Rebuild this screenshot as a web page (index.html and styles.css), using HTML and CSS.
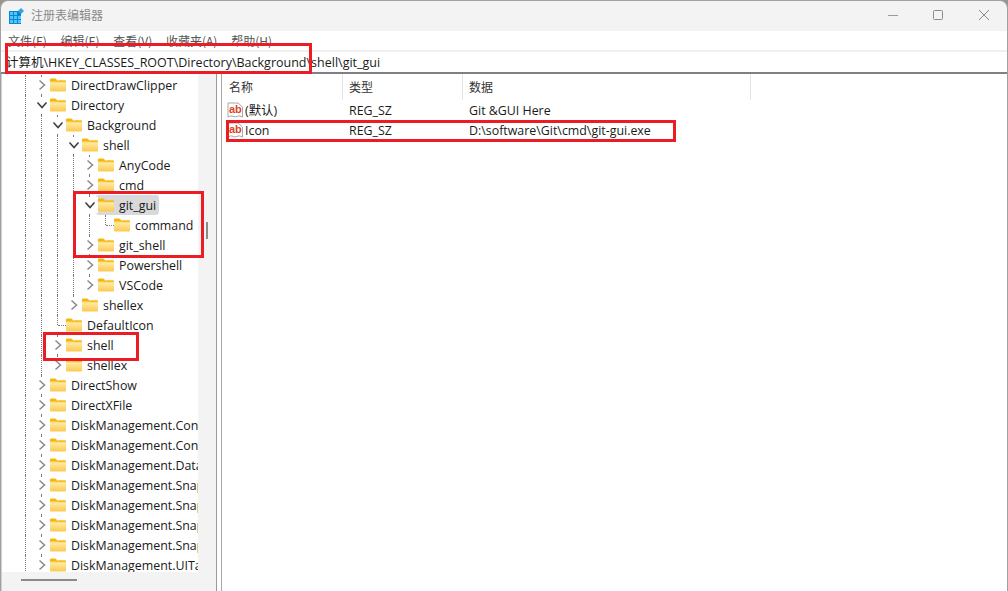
FILE: index.html
```html
<!DOCTYPE html>
<html lang="zh">
<head>
<meta charset="utf-8">
<title>注册表编辑器</title>
<link rel="stylesheet" href="styles.css">
</head>
<body>
<svg class="defs" width="0" height="0" aria-hidden="true">
  <defs>
    <linearGradient id="fg" x1="0" y1="0" x2="0" y2="1"><stop offset="0" stop-color="#ffeeb0"/><stop offset="1" stop-color="#fcc94f"/></linearGradient>
    <symbol id="folder" viewBox="0 0 16 16">
      <path d="M0 2.5Q0 1.5 1 1.5H5.5L7.5 3.5V5H0Z" fill="#f5b60d"/>
      <path d="M0 4.5H15Q16 4.5 16 5.5V13.5Q16 14.5 15 14.5H1Q0 14.5 0 13.5Z" fill="url(#fg)"/>
      <path d="M0 4.5H7L8.5 3.2H15Q16 3.2 16 4.2V5.2H0Z" fill="#f7bd1c"/>
    </symbol>
    <symbol id="right" viewBox="0 0 16 16"><path d="M5.5 3.5L10.5 8L5.5 12.5" fill="none" stroke="#8c8c8c" stroke-width="1.6"/></symbol>
    <symbol id="down" viewBox="0 0 16 16"><path d="M3.5 5.5L8 10.5L12.5 5.5" fill="none" stroke="#404040" stroke-width="1.6"/></symbol>
    <symbol id="ab" viewBox="0 0 16 16">
      <path d="M1 1H11L15.5 5V15L12 13.8L8 15L4 13.8L1 15Z" fill="#fff" stroke="#a8a8a8"/>
      <text x="2" y="11" class="abtext">ab</text>
    </symbol>
  </defs>
</svg>
<div class="window">
  <header class="titlebar">
    <svg class="appicon" viewBox="0 0 16 16" width="16" height="16">
      <rect x="0" y="3" width="12" height="13" fill="#0a84d6"/>
      <path d="M1 4h3v3H1zM5 4h3v3H5zM1 8h3v3H1zM5 8h3v3H5zM9 8h3v3H9zM1 12h3v3H1zM5 12h3v3H5zM9 12h3v3H9z" fill="#4fc8f7"/>
      <path d="M12 0l3 3-3 3-3-3z" fill="#35a3e4"/>
    </svg>
    <span class="title">注册表编辑器</span>
    <div class="controls">
      <svg viewBox="0 0 46 20" width="46" height="20"><path d="M19 10.5H29" stroke="#9a9a9a"/></svg>
      <svg viewBox="0 0 46 20" width="46" height="20"><rect x="18.5" y="5.5" width="9" height="9" rx="1" fill="none" stroke="#8c8c8c"/></svg>
      <svg viewBox="0 0 46 20" width="46" height="20"><path d="M18 5L28 15M28 5L18 15" stroke="#8c8c8c" fill="none"/></svg>
    </div>
  </header>
  <nav class="menu">
    <span>文件(F)</span><span>编辑(E)</span><span>查看(V)</span><span>收藏夹(A)</span><span>帮助(H)</span>
  </nav>
  <div class="address">计算机\HKEY_CLASSES_ROOT\Directory\Background\shell\git_gui</div>
  <main class="panes">
    <section class="treepane">
      <div class="treebody">
        <div class="tree">
          <div class="row"><i class="g"></i><i class="c"><svg><use href="#right"/></svg></i><svg class="f"><use href="#folder"/></svg><span class="l">DirectDrawClipper</span></div>
          <div class="row"><i class="g"></i><i class="c"><svg><use href="#down"/></svg></i><svg class="f"><use href="#folder"/></svg><span class="l">Directory</span></div>
          <div class="row"><i class="g"></i><i class="g"></i><i class="c"><svg><use href="#down"/></svg></i><svg class="f"><use href="#folder"/></svg><span class="l">Background</span></div>
          <div class="row"><i class="g"></i><i class="g"></i><i class="g"></i><i class="c"><svg><use href="#down"/></svg></i><svg class="f"><use href="#folder"/></svg><span class="l">shell</span></div>
          <div class="row"><i class="g"></i><i class="g"></i><i class="g"></i><i class="g"></i><i class="c"><svg><use href="#right"/></svg></i><svg class="f"><use href="#folder"/></svg><span class="l">AnyCode</span></div>
          <div class="row"><i class="g"></i><i class="g"></i><i class="g"></i><i class="g"></i><i class="c"><svg><use href="#right"/></svg></i><svg class="f"><use href="#folder"/></svg><span class="l">cmd</span></div>
          <div class="row"><i class="g"></i><i class="g"></i><i class="g"></i><i class="g"></i><i class="c"><svg><use href="#down"/></svg></i><span class="sel"><svg class="f"><use href="#folder"/></svg><span class="l">git_gui</span></span></div>
          <div class="row"><i class="g"></i><i class="g"></i><i class="g"></i><i class="g"></i><i class="g"></i><i class="k"></i><svg class="f"><use href="#folder"/></svg><span class="l">command</span></div>
          <div class="row"><i class="g"></i><i class="g"></i><i class="g"></i><i class="g"></i><i class="c"><svg><use href="#right"/></svg></i><svg class="f"><use href="#folder"/></svg><span class="l">git_shell</span></div>
          <div class="row"><i class="g"></i><i class="g"></i><i class="g"></i><i class="g"></i><i class="c"><svg><use href="#right"/></svg></i><svg class="f"><use href="#folder"/></svg><span class="l">Powershell</span></div>
          <div class="row"><i class="g"></i><i class="g"></i><i class="g"></i><i class="g"></i><i class="c end"><svg><use href="#right"/></svg></i><svg class="f"><use href="#folder"/></svg><span class="l">VSCode</span></div>
          <div class="row"><i class="g"></i><i class="g"></i><i class="g"></i><i class="c end"><svg><use href="#right"/></svg></i><svg class="f"><use href="#folder"/></svg><span class="l">shellex</span></div>
          <div class="row"><i class="g"></i><i class="g"></i><i class="k open"></i><svg class="f"><use href="#folder"/></svg><span class="l">DefaultIcon</span></div>
          <div class="row"><i class="g"></i><i class="g"></i><i class="c"><svg><use href="#right"/></svg></i><svg class="f"><use href="#folder"/></svg><span class="l">shell</span></div>
          <div class="row"><i class="g"></i><i class="g"></i><i class="c end"><svg><use href="#right"/></svg></i><svg class="f"><use href="#folder"/></svg><span class="l">shellex</span></div>
          <div class="row"><i class="g"></i><i class="c"><svg><use href="#right"/></svg></i><svg class="f"><use href="#folder"/></svg><span class="l">DirectShow</span></div>
          <div class="row"><i class="g"></i><i class="c"><svg><use href="#right"/></svg></i><svg class="f"><use href="#folder"/></svg><span class="l">DirectXFile</span></div>
          <div class="row"><i class="g"></i><i class="c"><svg><use href="#right"/></svg></i><svg class="f"><use href="#folder"/></svg><span class="l">DiskManagement.Connection</span></div>
          <div class="row"><i class="g"></i><i class="c"><svg><use href="#right"/></svg></i><svg class="f"><use href="#folder"/></svg><span class="l">DiskManagement.Control</span></div>
          <div class="row"><i class="g"></i><i class="c"><svg><use href="#right"/></svg></i><svg class="f"><use href="#folder"/></svg><span class="l">DiskManagement.DataObject</span></div>
          <div class="row"><i class="g"></i><i class="c"><svg><use href="#right"/></svg></i><svg class="f"><use href="#folder"/></svg><span class="l">DiskManagement.SnapIn</span></div>
          <div class="row"><i class="g"></i><i class="c"><svg><use href="#right"/></svg></i><svg class="f"><use href="#folder"/></svg><span class="l">DiskManagement.SnapInAbout</span></div>
          <div class="row"><i class="g"></i><i class="c"><svg><use href="#right"/></svg></i><svg class="f"><use href="#folder"/></svg><span class="l">DiskManagement.SnapInComponent</span></div>
          <div class="row"><i class="g"></i><i class="c"><svg><use href="#right"/></svg></i><svg class="f"><use href="#folder"/></svg><span class="l">DiskManagement.SnapInExtension</span></div>
          <div class="row"><i class="g"></i><i class="c"><svg><use href="#right"/></svg></i><svg class="f"><use href="#folder"/></svg><span class="l">DiskManagement.UITasks</span></div>
        </div>
        <div class="vscroll"><span class="vthumb"></span></div>
      </div>
      <div class="hscroll"><span class="hthumb"></span></div>
    </section>
    <section class="listpane">
      <div class="listhead">
        <span class="col c1">名称</span><span class="col c2">类型</span><span class="col c3">数据</span>
      </div>
      <div class="listrow"><span class="cell c1"><svg class="ab"><use href="#ab"/></svg>(默认)</span><span class="cell c2">REG_SZ</span><span class="cell c3">Git &amp;GUI Here</span></div>
      <div class="listrow"><span class="cell c1"><svg class="ab"><use href="#ab"/></svg>Icon</span><span class="cell c2">REG_SZ</span><span class="cell c3">D:\software\Git\cmd\git-gui.exe</span></div>
    </section>
  </main>
  <div class="mark m-address"></div>
  <div class="mark m-git"></div>
  <div class="mark m-shell"></div>
  <div class="mark m-icon"></div>
</div>
</body>
</html>
```
FILE: styles.css
```css
* { box-sizing: border-box; }
html, body { margin: 0; height: 100%; overflow: hidden; }
body {
  background: #9a948c;
  font-family: "Open Sans", "Noto Sans CJK SC", sans-serif;
  font-size: 12.4px;
  color: #1a1a1a;
}
.defs { position: absolute; }
.abtext { font-family: "Liberation Sans", sans-serif; font-weight: 700; font-size: 11px; fill: #d9442a; }
.window {
  position: relative;
  width: 1008px;
  height: 591px;
  display: flex;
  flex-direction: column;
  background: #f3f3f3;
  border: 1px solid #a0a0a0;
  border-bottom: 0;
  border-radius: 8px 8px 0 0;
  overflow: hidden;
}
.titlebar {
  height: 30px;
  flex: none;
  display: flex;
  align-items: center;
  padding-left: 8px;
  padding-bottom: 2px;
}
.appicon { flex: none; margin-top: 1px; }
.title {
  margin-left: 6px;
  margin-bottom: 2px;
  font-family: "Noto Sans CJK SC", sans-serif;
  font-size: 12px;
  color: #8a8a8a;
}
.controls { margin-left: auto; display: flex; }
.menu {
  height: 19px;
  flex: none;
  background: #fff;
  display: flex;
  gap: 13.7px;
  padding-left: 7px;
  align-items: center;
  font-family: "Noto Sans CJK SC", sans-serif;
  font-size: 12px;
  color: #555;
}
.address {
  height: 24px;
  flex: none;
  background: #fff;
  border-top: 2px solid #f0f0f0;
  border-bottom: 2px solid #7f7f84;
  padding-left: 5px;
  line-height: 21px;
  font-family: "Open Sans", "Noto Sans CJK SC", sans-serif;
  font-size: 12.5px;
  white-space: nowrap;
}
.panes { flex: 1; min-height: 0; display: flex; background: #fff; }
.treepane {
  width: 216px;
  flex: none;
  display: flex;
  flex-direction: column;
  background: #f3f3f3;
  border-left: 1px solid #d0d0d0;
  border-right: 1px solid #9a9a9a;
}
.treebody { flex: 1; min-height: 0; display: flex; overflow: hidden; }
.tree { width: 196px; flex: none; background: #fff; padding-left: 16px; padding-top: 1px; overflow: hidden; }
.vscroll { flex: 1; position: relative; }
.vthumb { position: absolute; left: 8px; top: 148px; width: 2px; height: 17px; background: #8a8a8a; }
.hscroll { height: 19px; flex: none; padding: 7px 0 0 19px; }
.hthumb { display: block; width: 56px; height: 2px; background: #8a8a8a; }
.row { height: 20px; display: flex; align-items: center; white-space: nowrap; }
.g, .c, .k { display: block; width: 16px; height: 20px; flex: none; position: relative; }
.g::before, .c::before, .k::before {
  content: "";
  position: absolute;
  left: 7px;
  top: 0;
  bottom: 0;
  border-left: 1px dotted #7a7a7a;
}
.c svg { position: absolute; left: 0; top: 2px; width: 16px; height: 16px; background: #fff; }
.c.end::before { bottom: 50%; }
.k::before { bottom: 50%; }
.k::after {
  content: "";
  position: absolute;
  left: 8px;
  top: 10px;
  width: 8px;
  border-top: 1px dotted #7a7a7a;
}
.f { width: 16px; height: 16px; flex: none; }
.l { margin-left: 5px; }
.sel { display: flex; align-items: center; height: 20px; background: #d9d9d9; border-radius: 3px; padding-right: 3px; margin-left: -2px; padding-left: 2px; }
.listpane { flex: 1; margin-left: 4px; border-left: 1px solid #a8a8a8; background: #fff; min-width: 0; }
.listhead { height: 26px; display: flex; align-items: center; font-family: "Noto Sans CJK SC", sans-serif; font-size: 12px; color: #333; }
.col { height: 26px; line-height: 26px; border-right: 1px solid #e4e4e4; padding-left: 6px; flex: none; }
.col.c1 { padding-left: 7px; }
.c1 { width: 121px; }
.c2 { width: 120px; }
.c3 { width: 288px; }
.listrow { height: 20px; display: flex; align-items: center; white-space: nowrap; }
.cell { flex: none; padding-left: 6px; display: flex; align-items: center; }
.cell.c1 { padding-left: 5px; font-family: "Open Sans", "Noto Sans CJK SC", sans-serif; }
.ab { width: 16px; height: 16px; flex: none; margin-right: 2px; }
.mark { position: absolute; border: 3px solid #ed1c24; pointer-events: none; }
.m-address { left: 4px; top: 42px; width: 307px; height: 31px; }
.m-git { left: 72px; top: 190px; width: 131px; height: 67px; }
.m-shell { left: 42px; top: 331px; width: 96px; height: 29px; }
.m-icon { left: 225px; top: 119px; width: 450px; height: 22px; }
```
